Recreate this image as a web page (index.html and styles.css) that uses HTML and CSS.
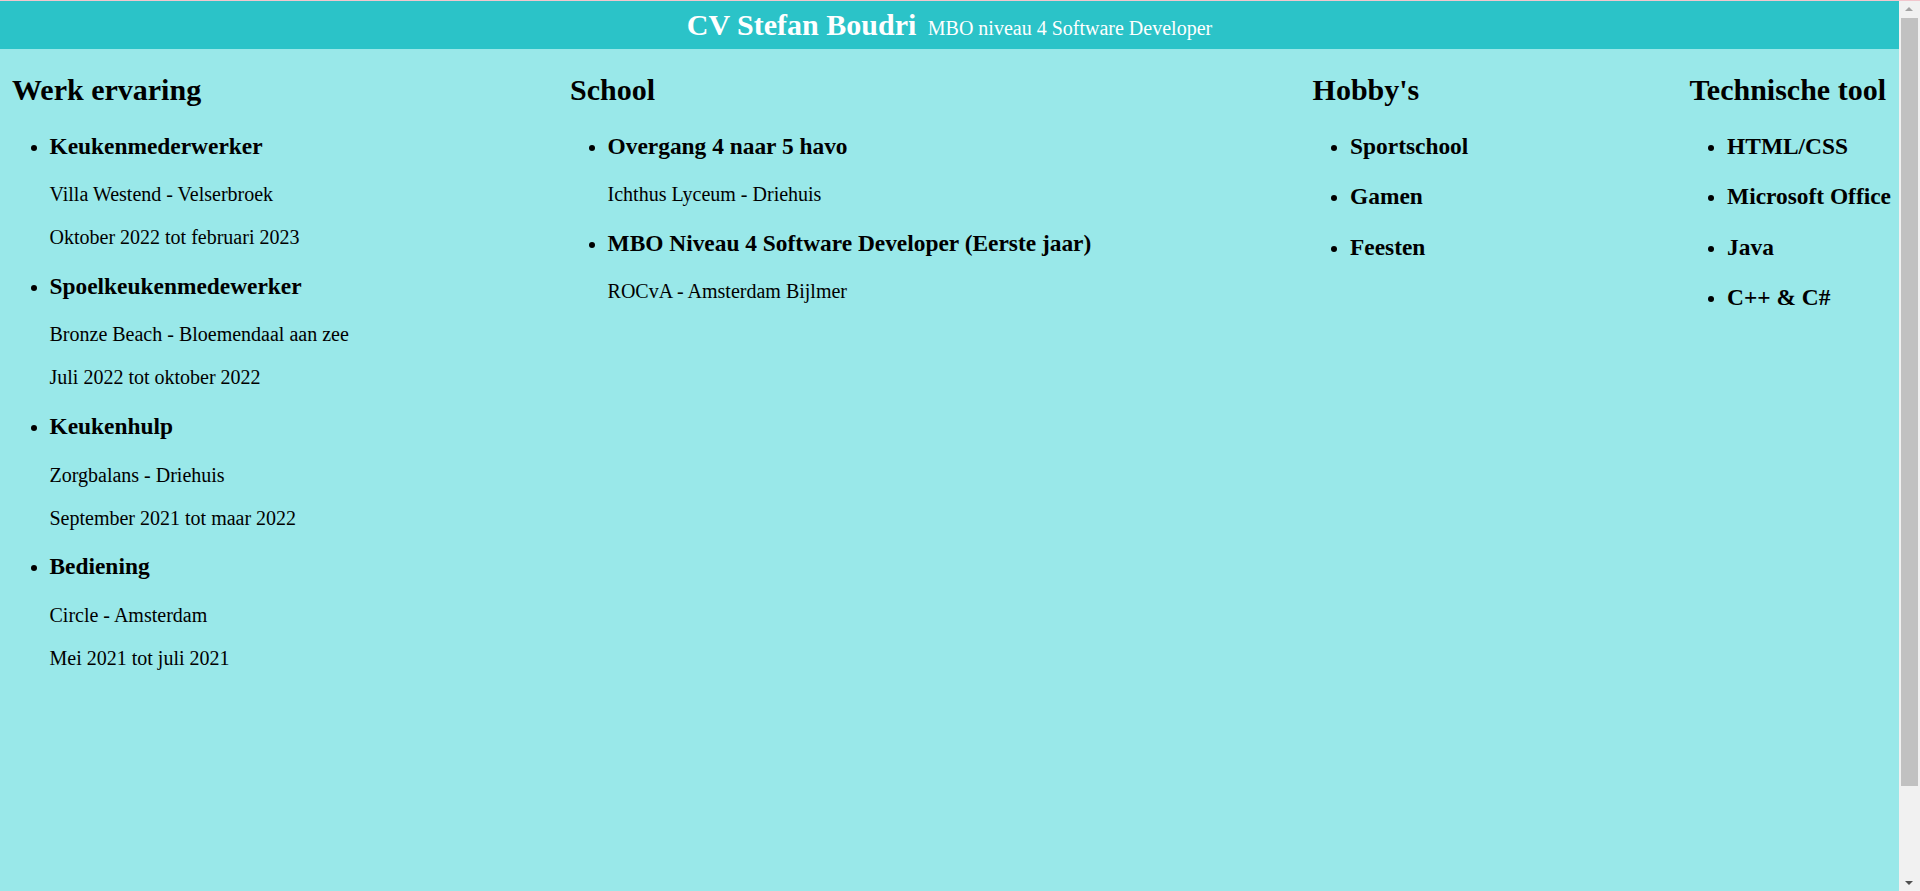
FILE: index.html
```html
<!DOCTYPE html>
<html lang="nl">
<head>
<meta charset="utf-8">
<title>CV Stefan Boudri</title>
<link rel="stylesheet" href="styles.css">
</head>
<body>
<div class="window">
  <div class="page">
    <header class="topbar">
      <h1 class="title">CV Stefan Boudri</h1>
      <span class="subtitle">MBO niveau 4 Software Developer</span>
    </header>
    <main class="columns">
      <section class="col">
        <h2>Werk ervaring</h2>
        <ul>
          <li>
            <h3>Keukenmederwerker</h3>
            <p>Villa Westend - Velserbroek</p>
            <p>Oktober 2022 tot februari 2023</p>
          </li>
          <li>
            <h3>Spoelkeukenmedewerker</h3>
            <p>Bronze Beach - Bloemendaal aan zee</p>
            <p>Juli 2022 tot oktober 2022</p>
          </li>
          <li>
            <h3>Keukenhulp</h3>
            <p>Zorgbalans - Driehuis</p>
            <p>September 2021 tot maar 2022</p>
          </li>
          <li>
            <h3>Bediening</h3>
            <p>Circle - Amsterdam</p>
            <p>Mei 2021 tot juli 2021</p>
          </li>
        </ul>
      </section>
      <section class="col">
        <h2>School</h2>
        <ul>
          <li>
            <h3>Overgang 4 naar 5 havo</h3>
            <p>Ichthus Lyceum - Driehuis</p>
          </li>
          <li>
            <h3>MBO Niveau 4 Software Developer (Eerste jaar)</h3>
            <p>ROCvA - Amsterdam Bijlmer</p>
          </li>
        </ul>
      </section>
      <section class="col">
        <h2>Hobby's</h2>
        <ul>
          <li><h3>Sportschool</h3></li>
          <li><h3>Gamen</h3></li>
          <li><h3>Feesten</h3></li>
        </ul>
      </section>
      <section class="col">
        <h2>Technische tool</h2>
        <ul>
          <li><h3>HTML/CSS</h3></li>
          <li><h3>Microsoft Office</h3></li>
          <li><h3>Java</h3></li>
          <li><h3>C++ &amp; C#</h3></li>
        </ul>
      </section>
    </main>
  </div>
  <div class="scrollbar" aria-hidden="true">
    <div class="arrow arrow-up"></div>
    <div class="track"><div class="thumb"></div></div>
    <div class="arrow arrow-down"></div>
  </div>
</div>
</body>
</html>
```

FILE: styles.css
```css
html, body {
  margin: 0;
  padding: 0;
  height: 100%;
}

body {
  font-family: "Liberation Serif", "Times New Roman", serif;
  font-size: 20px;
  color: #000;
  background: #99e8e9;
  overflow: hidden;
}

.window {
  display: grid;
  grid-template-columns: 1fr 21px;
  height: 100vh;
  box-sizing: border-box;
  border-top: 1px solid #f2c6cd;
}

.page {
  background: #99e8e9;
  min-width: 0;
}

.topbar {
  height: 48px;
  background: #2bc3c8;
  color: #fff;
  display: flex;
  justify-content: center;
  align-items: baseline;
  gap: 11.5px;
  padding-top: 7px;
  box-sizing: border-box;
}

.title {
  margin: 0;
  font-size: 30px;
  font-weight: bold;
  line-height: 34.5px;
}

.subtitle {
  font-size: 20px;
}

.columns {
  display: flex;
  justify-content: space-between;
  align-items: flex-start;
  padding: 0 8px 0 12px;
}

.col h2 {
  font-size: 30px;
  font-weight: bold;
  margin: 24.3px 0 25.3px;
}

.col ul {
  margin: 0;
  padding-left: 37.5px;
  list-style: disc;
}

.col h3 {
  font-size: 23.4px;
  font-weight: bold;
  margin: 23.6px 0;
}

.col li:first-child h3 {
  margin-top: 0;
}

.col p {
  margin: 20px 0;
}

/* decorative scrollbar as seen in the screenshot */
.scrollbar {
  background: #f1f1f1;
  display: flex;
  flex-direction: column;
}

.arrow {
  height: 17px;
  position: relative;
}

.arrow::after {
  content: "";
  position: absolute;
  left: 6px;
  width: 0;
  height: 0;
  border-left: 4px solid transparent;
  border-right: 4px solid transparent;
}

.arrow-up::after {
  top: 6px;
  border-bottom: 4px solid #a3a3a3;
}

.arrow-down::after {
  top: 7px;
  border-top: 4px solid #505050;
}

.track {
  flex: 1;
  padding: 0 2px 88px 2px;
  display: flex;
}

.thumb {
  flex: 1;
  background: #c1c1c1;
}
```
